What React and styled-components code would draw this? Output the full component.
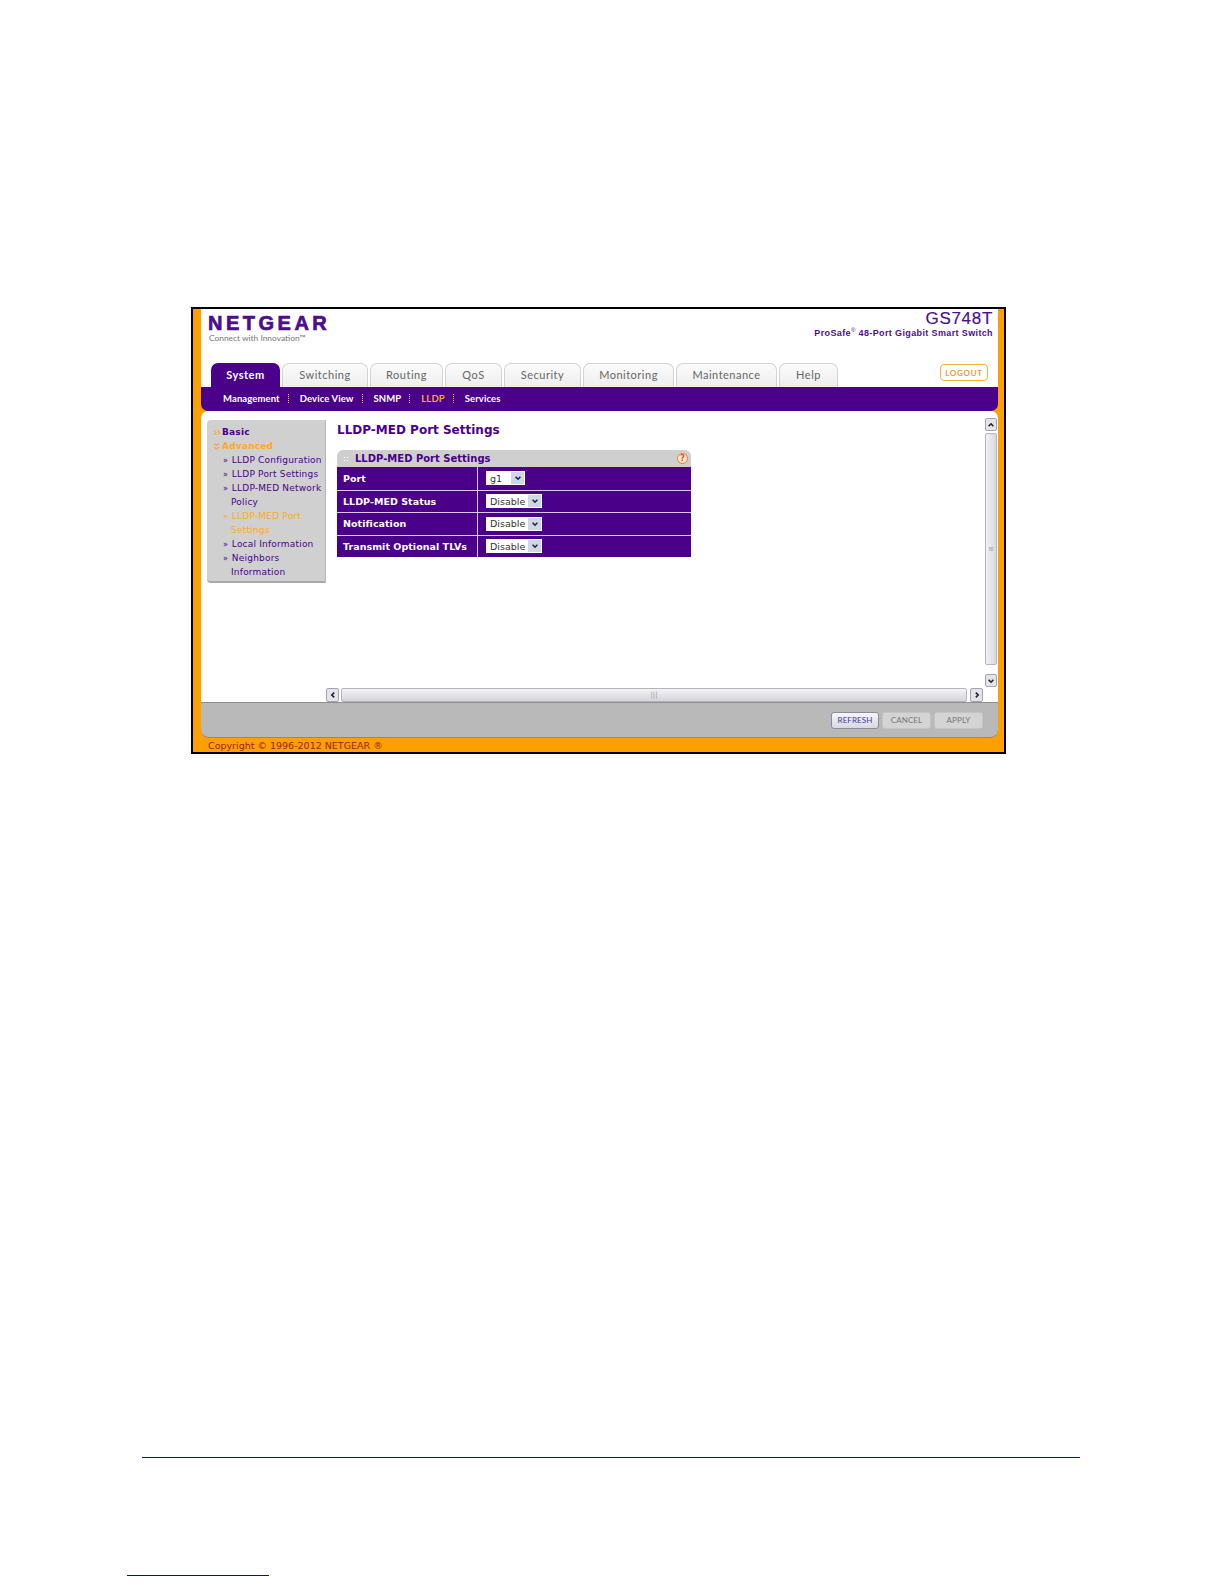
import styled, { createGlobalStyle } from 'styled-components';

const Global = createGlobalStyle`
  html, body { margin: 0; padding: 0; background: #fff; }
  * { box-sizing: border-box; }
`;

const Page = styled.div`
  width: 1224px;
  height: 1584px;
  padding-top: 307px;
  background: #fff;
  font-family: 'DejaVu Sans', Verdana, sans-serif;
`;

const Frame = styled.div`
  width: 815px;
  height: 447px;
  margin-left: 191px;
  border: 2px solid #000;
  background: #fca000;
  display: flex;
  flex-direction: column;
  padding-left: 8px;
  padding-right: 6px;
`;

const Header = styled.div`
  height: 54px;
  flex: none;
  background: #fff;
  display: flex;
  justify-content: space-between;
`;

const Logo = styled.div`
  padding: 4px 0 0 7px;
`;

const LogoName = styled.div`
  font-family: 'Liberation Sans', Arial, sans-serif;
  font-weight: 700;
  font-size: 20px;
  line-height: 20px;
  letter-spacing: 3.5px;
  color: #4b0f8c;
  -webkit-text-stroke: 0.7px #4b0f8c;
`;

const LogoTag = styled.div`
  font-family: Lato, sans-serif;
  font-size: 8.4px;
  line-height: 10px;
  padding-left: 1px;
  color: #777;
`;

const Product = styled.div`
  text-align: right;
  padding-right: 5px;
  color: #4b0f8c;
  font-family: 'Liberation Sans', Arial, sans-serif;
`;

const Model = styled.div`
  font-size: 17px;
  line-height: 17px;
  margin-top: 1px;
  letter-spacing: 0.7px;
  -webkit-text-stroke: 0.2px #4b0f8c;
`;

const Tagline = styled.div`
  font-size: 9px;
  line-height: 11px;
  margin-top: 1px;
  font-weight: 700;
  letter-spacing: 0.37px;
`;

const TabRow = styled.div`
  height: 24px;
  flex: none;
  background: #fff;
  display: flex;
  align-items: flex-end;
  padding-left: 10px;
  position: relative;
`;

const Tab = styled.div`
  width: ${(p) => p.$w}px;
  margin-right: 2px;
  height: 24px;
  border-radius: 7px 7px 0 0;
  display: flex;
  align-items: center;
  justify-content: center;
  font-family: Lato, sans-serif;
  font-size: 11px;
  letter-spacing: 0.5px;
  padding-bottom: 2px;
  color: ${(p) => (p.$active ? '#fff' : '#666')};
  font-weight: ${(p) => (p.$active ? 700 : 400)};
  background: ${(p) => (p.$active ? '#4b0089' : 'linear-gradient(#fbfbfb, #eeeeee)')};
  border: ${(p) => (p.$active ? 'none' : '1px solid #d2d2d2')};
  border-bottom: none;
`;

const Logout = styled.div`
  position: absolute;
  right: 10px;
  top: 1px;
  width: 48px;
  height: 17px;
  border: 1px solid #f2b145;
  border-radius: 4px;
  display: flex;
  align-items: center;
  justify-content: center;
  font-family: Lato, sans-serif;
  font-size: 8px;
  font-weight: 700;
  letter-spacing: 0.7px;
  color: #e9a02a;
`;

const SubNav = styled.div`
  height: 24px;
  flex: none;
  background: #4b0089;
  border-radius: 0 0 7px 7px;
  display: flex;
  align-items: center;
  padding: 0 0 2px 22px;
  font-family: Lato, sans-serif;
  font-size: 9.5px;
  font-weight: 700;
  letter-spacing: 0.1px;
  color: #fff;
`;

const SubItem = styled.span`
  color: ${(p) => (p.$active ? '#f9a92b' : '#fff')};
`;

const SubSep = styled.span`
  width: 0;
  height: 9px;
  border-left: 1px dotted ${(p) => (p.$active ? '#f9a92b' : '#d8c8e8')};
  margin: 0 11px 0 8px;
`;

const Content = styled.div`
  height: 291px;
  flex: none;
  background: #fff;
  border-radius: 7px 7px 0 0;
  display: flex;
  flex-direction: column;
`;

const ContentRow = styled.div`
  height: 277px;
  display: flex;
  padding-left: 6px;
`;

const Sidebar = styled.div`
  width: 119px;
  flex: none;
  height: 163px;
  margin-top: 9px;
  background: #d0d0d0;
  border-right: 1px solid #b5b5b5;
  border-bottom: 2px solid #a9a9a9;
  border-radius: 4px 0 0 4px;
  padding: 5px 0 0 6px;
  font-size: 9px;
  line-height: 14px;
  letter-spacing: 0.2px;
`;

const SideHead = styled.div`
  display: flex;
  align-items: center;
  font-weight: 700;
  white-space: nowrap;
  color: ${(p) => (p.$active ? '#f9a92b' : '#4b0089')};
`;

const HeadMark = styled.svg`
  width: 9px;
  height: 9px;
  flex: none;
`;

const SideItem = styled.div`
  padding-left: 18px;
  text-indent: -8px;
  width: 112px;
  color: ${(p) => (p.$active ? '#f9a92b' : '#4b0089')};
  &::before {
    content: '» ';
    font-size: 8px;
    line-height: 0;
    margin-right: 1px;
  }
`;

const Main = styled.div`
  width: 659px;
  flex: none;
  padding: 10px 0 0 11px;
`;

const Title = styled.h1`
  margin: 0;
  height: 20px;
  font-size: 12px;
  line-height: 19px;
  font-weight: 700;
  color: #4b0089;
`;

const Panel = styled.div`
  width: 354px;
  margin-top: 9px;
`;

const PanelHead = styled.div`
  height: 17px;
  background: #cfcfcf;
  border-radius: 6px 6px 0 0;
  display: flex;
  align-items: center;
  padding: 0 3px 0 6px;
  font-size: 10px;
  font-weight: 700;
  color: #4b0089;
`;

const Dots = styled.span`
  width: 5px;
  height: 5px;
  margin-right: 7px;
  background-image: radial-gradient(#fff 1px, transparent 1px);
  background-size: 3px 3px;
`;

const HelpIcon = styled.span`
  margin-left: auto;
  width: 11px;
  height: 11px;
  border-radius: 50%;
  border: 1px solid #f07a2a;
  background: #fde6cf;
  color: #e0531a;
  font-size: 8px;
  font-weight: 700;
  line-height: 9px;
  text-align: center;
`;

const Row = styled.div`
  height: 22.5px;
  background: #4b0089;
  border-top: ${(p) => (p.$first ? 'none' : '1px solid #d8c8e8')};
  display: grid;
  grid-template-columns: 141px 1fr;
  align-items: center;
`;

const RowLabel = styled.div`
  height: 100%;
  display: flex;
  align-items: center;
  padding-left: 6px;
  border-right: 1px solid #d8c8e8;
  font-size: 9.5px;
  font-weight: 700;
  letter-spacing: 0.04px;
  color: #fff;
`;

const Select = styled.div`
  width: ${(p) => p.$w}px;
  height: 14px;
  margin-left: 8px;
  background: #fff;
  display: flex;
  align-items: center;
  justify-content: space-between;
  padding: 1px 1px 1px 4px;
  font-size: 9.5px;
  color: #333;
`;

const SelectArrow = styled.span`
  width: 13px;
  height: 12px;
  background: #cfd6e8;
  display: flex;
  align-items: center;
  justify-content: center;
`;

const VScroll = styled.div`
  width: 12px;
  height: 269px;
  margin-top: 7px;
  display: flex;
  flex-direction: column;
`;

const ScrollBtn = styled.div`
  flex: none;
  width: ${(p) => (p.$h ? 13 : 12)}px;
  height: ${(p) => (p.$h ? 14 : 13)}px;
  background: #e4e4ea;
  border: 1px solid #a4a4b0;
  border-radius: 2px;
  display: flex;
  align-items: center;
  justify-content: center;
`;

const VThumb = styled.div`
  flex: 1;
  margin: 2px 0 9px;
  background: linear-gradient(90deg, #f2f2f5, #d8d8e0);
  border: 1px solid #b4b4bc;
  border-radius: 2px;
  display: flex;
  align-items: center;
  justify-content: center;
  color: #999;
  font-size: 7px;
`;

const HScroll = styled.div`
  height: 14px;
  margin-left: 125px;
  width: 657px;
  display: flex;
`;

const HThumb = styled.div`
  flex: 1;
  margin: 0 3px 0 2px;
  background: linear-gradient(#f4f4f6, #d4d4da);
  border: 1px solid #b4b4bc;
  border-radius: 2px;
  display: flex;
  align-items: center;
  justify-content: center;
  color: #999;
  font-size: 7px;
`;

const Footer = styled.div`
  height: 36px;
  flex: none;
  background: #b9b9b9;
  border-top: 1px solid #8f8f8f;
  border-bottom: 1px solid #8a8a8a;
  border-radius: 0 0 8px 8px;
  display: flex;
  align-items: center;
  justify-content: flex-end;
  gap: 3px;
  padding: 0 15px 0 0;
`;

const Button = styled.div`
  width: ${(p) => p.$w}px;
  height: 17px;
  border-radius: 3px;
  display: flex;
  align-items: center;
  justify-content: center;
  font-family: Lato, sans-serif;
  font-size: 8px;
  letter-spacing: 0.1px;
  color: ${(p) => (p.$active ? '#3b3b9b' : '#777')};
  background: ${(p) => (p.$active ? 'linear-gradient(#f6f6f8, #d8d8e0)' : '#d4d4d4')};
  border: 1px solid ${(p) => (p.$active ? '#8b8ba0' : '#c4c4c4')};
`;

const Copyright = styled.div`
  height: 14px;
  padding-left: 7px;
  font-size: 9.5px;
  line-height: 16px;
  white-space: nowrap;
  color: #9a2414;
`;

const PageRule = styled.div`
  height: 1px;
  background: #0b0b9c;
  width: ${(p) => p.$w}px;
  margin-left: ${(p) => p.$l}px;
  margin-top: ${(p) => p.$t}px;
`;

const Sup = styled.sup`
  font-size: 6px;
  line-height: 0;
  font-weight: 400;
`;

const Chevron = ({ d, size = 8 }) => (
  <svg width={size} height={size} viewBox="0 0 10 10">
    <path d={d} fill="none" stroke="#223" strokeWidth="2" />
  </svg>
);

const DOWN = 'M2 3.5 5 6.5 8 3.5';
const UP = 'M2 6.5 5 3.5 8 6.5';
const LEFT = 'M6.5 2 3.5 5 6.5 8';
const RIGHT = 'M3.5 2 6.5 5 3.5 8';

const tabs = [
  ['System', 69, true],
  ['Switching', 86],
  ['Routing', 73],
  ['QoS', 57],
  ['Security', 77],
  ['Monitoring', 91],
  ['Maintenance', 101],
  ['Help', 59],
];

const rows = [
  ['Port', 'g1', 39],
  ['LLDP-MED Status', 'Disable', 56],
  ['Notification', 'Disable', 56],
  ['Transmit Optional TLVs', 'Disable', 56],
];

export default function App() {
  return (
    <Page>
      <Global />
      <Frame>
        <Header>
          <Logo>
            <LogoName>NETGEAR</LogoName>
            <LogoTag>Connect with Innovation™</LogoTag>
          </Logo>
          <Product>
            <Model>GS748T</Model>
            <Tagline>ProSafe<Sup>®</Sup> 48-Port Gigabit Smart Switch</Tagline>
          </Product>
        </Header>
        <TabRow>
          {tabs.map(([name, w, active]) => (
            <Tab key={name} $w={w} $active={active}>{name}</Tab>
          ))}
          <Logout>LOGOUT</Logout>
        </TabRow>
        <SubNav>
          <SubItem>Management</SubItem>
          <SubSep />
          <SubItem>Device View</SubItem>
          <SubSep />
          <SubItem>SNMP</SubItem>
          <SubSep />
          <SubItem $active>LLDP</SubItem>
          <SubSep $active />
          <SubItem>Services</SubItem>
        </SubNav>
        <Content>
          <ContentRow>
            <Sidebar>
              <SideHead>
                <HeadMark viewBox="0 0 9 9">
                  <path d="M1 2 3 4.5 1 7M4.5 2 6.5 4.5 4.5 7" fill="none" stroke="#f9a92b" strokeWidth="1.2" />
                </HeadMark>
                Basic
              </SideHead>
              <SideHead $active>
                <HeadMark viewBox="0 0 9 9">
                  <path d="M1 1.5 3.5 3.5 6 1.5M1 5 3.5 7 6 5" fill="none" stroke="#f9a92b" strokeWidth="1.2" />
                </HeadMark>
                Advanced
              </SideHead>
              <SideItem>LLDP Configuration</SideItem>
              <SideItem>LLDP Port Settings</SideItem>
              <SideItem>LLDP-MED Network Policy</SideItem>
              <SideItem $active>LLDP-MED Port Settings</SideItem>
              <SideItem>Local Information</SideItem>
              <SideItem>Neighbors Information</SideItem>
            </Sidebar>
            <Main>
              <Title>LLDP-MED Port Settings</Title>
              <Panel>
                <PanelHead>
                  <Dots />
                  LLDP-MED Port Settings
                  <HelpIcon>?</HelpIcon>
                </PanelHead>
                {rows.map(([label, value, w], i) => (
                  <Row key={label} $first={i === 0}>
                    <RowLabel>{label}</RowLabel>
                    <Select $w={w}>
                      {value}
                      <SelectArrow><Chevron d={DOWN} /></SelectArrow>
                    </Select>
                  </Row>
                ))}
              </Panel>
            </Main>
            <VScroll>
              <ScrollBtn><Chevron d={UP} /></ScrollBtn>
              <VThumb>≡</VThumb>
              <ScrollBtn><Chevron d={DOWN} /></ScrollBtn>
            </VScroll>
          </ContentRow>
          <HScroll>
            <ScrollBtn $h><Chevron d={LEFT} /></ScrollBtn>
            <HThumb>|||</HThumb>
            <ScrollBtn $h><Chevron d={RIGHT} /></ScrollBtn>
          </HScroll>
        </Content>
        <Footer>
          <Button $w={48} $active>REFRESH</Button>
          <Button $w={49}>CANCEL</Button>
          <Button $w={49}>APPLY</Button>
        </Footer>
        <Copyright>Copyright © 1996-2012 NETGEAR ®</Copyright>
      </Frame>
      <PageRule $w={938} $l={142} $t={703} />
      <PageRule $w={142} $l={127} $t={117} />
    </Page>
  );
}
